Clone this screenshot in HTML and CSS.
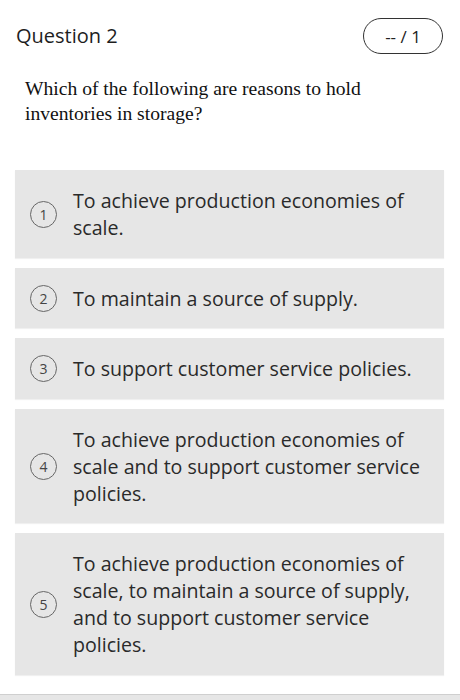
FILE: index.html
```html
<!DOCTYPE html>
<html>
<head>
<meta charset="utf-8">
<link rel="stylesheet" href="styles.css">
</head>
<body>
<div class="page">
  <header class="head">
    <h2 class="title">Question 2</h2>
    <div class="score">-- / 1</div>
  </header>
  <p class="prompt">Which of the following are reasons to hold inventories in storage?</p>
  <ul class="options">
    <li class="option"><span class="num">1</span><span class="text">To achieve production economies of scale.</span></li>
    <li class="option"><span class="num">2</span><span class="text">To maintain a source of supply.</span></li>
    <li class="option"><span class="num">3</span><span class="text">To support customer service policies.</span></li>
    <li class="option"><span class="num">4</span><span class="text">To achieve production economies of scale and to support customer service policies.</span></li>
    <li class="option"><span class="num">5</span><span class="text">To achieve production economies of scale, to maintain a source of supply, and to support customer service policies.</span></li>
  </ul>
  <div class="footer"></div>
</div>
</body>
</html>
```
FILE: styles.css
```css
* { box-sizing: border-box; }
html, body { margin: 0; padding: 0; background: #fff; }
body { font-family: "Open Sans", sans-serif; color: #222; }
.page { width: 460px; height: 700px; overflow: hidden; display: flex; flex-direction: column; }
.head { display: flex; justify-content: space-between; align-items: center; padding: 18px 17px 0 16px; }
.title { margin: 0; font-size: 20px; font-weight: 400; line-height: 36px; color: #1e1e1e; }
.score { width: 80px; height: 36px; border: 1.5px solid #333; border-radius: 18px; display: flex; align-items: center; justify-content: center; font-size: 17px; color: #222; }
.prompt { margin: 22px 0 0 25px; width: 390px; font-family: "Liberation Serif", serif; font-size: 19.6px; line-height: 25px; color: #111; }
.options { list-style: none; margin: 44px 0 0 15px; padding: 0; width: 429px; display: flex; flex-direction: column; gap: 10px; }
.option { background: #e6e6e6; display: flex; align-items: center; padding: 17px 10px 16.6px 15px; box-shadow: 0 1px 1px rgba(0,0,0,0.06); }
.num { flex: none; width: 27px; height: 27px; border: 1.5px solid #666; border-radius: 50%; display: flex; align-items: center; justify-content: center; font-size: 14px; color: #444; margin-right: 16px; }
.text { flex: 1; font-size: 19.6px; line-height: 27px; color: #2a2a2a; }
.footer { margin-top: auto; height: 6px; background: #e6e6e6; border-top: 1px solid #cfcfcf; }
```
